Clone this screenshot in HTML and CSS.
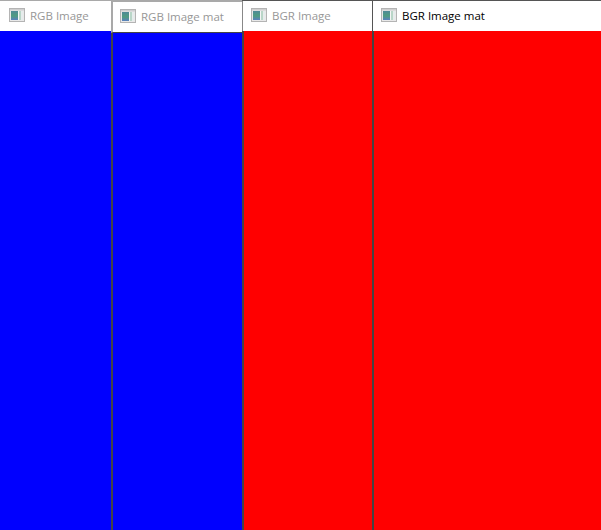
FILE: index.html
```html
<!DOCTYPE html>
<html lang="en">
<head>
    <meta charset="UTF-8">
    <title>Image windows</title>
    <link rel="stylesheet" href="styles.css">
</head>
<body>
    <svg class="sprites" width="0" height="0">
        <defs>
            <linearGradient id="pane" x1="0" y1="0" x2="0" y2="1">
                <stop offset="0" stop-color="#4f8a98"/>
                <stop offset="0.55" stop-color="#4f9c80"/>
                <stop offset="1" stop-color="#5a80c0"/>
            </linearGradient>
            <symbol id="app-icon" viewBox="0 0 16 14">
                <rect x="0.5" y="0.5" width="15" height="13" fill="#e9e9e9" stroke="#b4b4b4"/>
                <rect x="1" y="1" width="14" height="1.5" fill="#cfcfcf"/>
                <rect x="2" y="3" width="7" height="9" fill="url(#pane)"/>
                <rect x="9" y="3" width="1" height="9" fill="#f4f4f4"/>
                <rect x="10" y="3" width="2" height="9" fill="#b9d6c8"/>
                <rect x="12" y="3" width="2" height="9" fill="#e6ecec"/>
            </symbol>
        </defs>
    </svg>

    <div class="desktop">
        <div class="window win-rgb">
            <div class="titlebar">
                <svg class="icon"><use href="#app-icon"/></svg>
                <span class="title">RGB Image</span>
            </div>
            <div class="canvas blue"></div>
        </div>
        <div class="window win-rgb-mat">
            <div class="titlebar">
                <svg class="icon"><use href="#app-icon"/></svg>
                <span class="title">RGB Image mat</span>
            </div>
            <div class="canvas blue"></div>
        </div>
        <div class="window win-bgr">
            <div class="titlebar">
                <svg class="icon"><use href="#app-icon"/></svg>
                <span class="title">BGR Image</span>
            </div>
            <div class="canvas red"></div>
        </div>
        <div class="window win-bgr-mat">
            <div class="titlebar">
                <svg class="icon"><use href="#app-icon"/></svg>
                <span class="title active">BGR Image mat</span>
            </div>
            <div class="canvas red"></div>
        </div>
    </div>
</body>
</html>
```

FILE: styles.css
```css
html, body {
    margin: 0;
    height: 100%;
    overflow: hidden;
}
body {
    font-family: "Open Sans", "Noto Sans", sans-serif;
    font-size: 11.5px;
    background-color: #fff;
}
.sprites {
    position: absolute;
}
.desktop {
    display: flex;
    height: 530px;
}
.window {
    display: flex;
    flex-direction: column;
    box-sizing: border-box;
    border-top: 1px solid #555;
}
.win-rgb {
    width: 111px;
    border-top-color: #a9a9a9;
}
.win-rgb-mat {
    width: 131px;
    border-top: 2px solid #a9a9a9;
}
.win-bgr {
    width: 130px;
}
.win-bgr-mat {
    flex: 1;
}
.titlebar {
    display: flex;
    align-items: center;
    box-sizing: border-box;
    height: 30px;
    flex-shrink: 0;
    padding-left: 9px;
    background-color: #fff;
}
.win-rgb-mat .titlebar {
    height: 31px;
    padding-left: 7px;
    border-left: 2px solid #a9a9a9;
    border-bottom: 1px solid #444;
}
.win-bgr .titlebar {
    padding-left: 8px;
    border-left: 1px solid #888;
}
.win-bgr-mat .titlebar {
    padding-left: 8px;
    border-left: 1px solid #555;
}
.icon {
    width: 16px;
    height: 14px;
    margin-right: 5px;
    margin-bottom: 2px;
}
.title {
    color: #979797;
    margin-bottom: 2px;
}
.title.active {
    color: #000;
}
.canvas {
    flex: 1;
}
.win-rgb-mat .canvas,
.win-bgr .canvas,
.win-bgr-mat .canvas {
    border-left: 2px solid #444;
}
.blue {
    background-color: #0000ff;
}
.red {
    background-color: #ff0000;
}
```
